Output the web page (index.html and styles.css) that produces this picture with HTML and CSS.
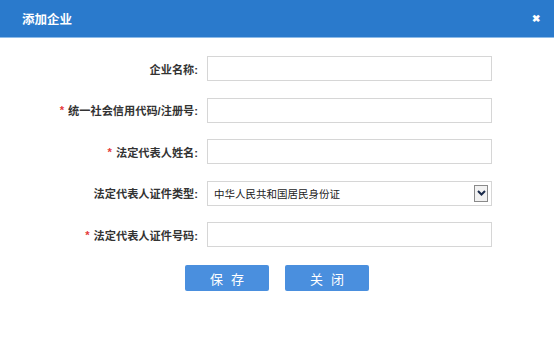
FILE: index.html
```html
<!DOCTYPE html>
<html lang="zh-CN">
<head>
    <meta charset="UTF-8">
    <meta name="viewport" content="width=device-width, initial-scale=1.0">
    <title>添加企业</title>
    <link rel="stylesheet" href="styles.css">
</head>
<body>
    <div class="dialog">
        <div class="dialog-header">
            <span class="dialog-title">添加企业</span>
            <span class="dialog-close">&#10006;</span>
        </div>
        <form class="dialog-form" onsubmit="return false;">
            <label class="form-label" for="qymc">企业名称:</label>
            <input class="form-input" type="text" id="qymc">

            <label class="form-label" for="tyxydm"><span class="req">*</span>统一社会信用代码/注册号:</label>
            <input class="form-input" type="text" id="tyxydm">

            <label class="form-label" for="fddbr"><span class="req">*</span>法定代表人姓名:</label>
            <input class="form-input" type="text" id="fddbr">

            <label class="form-label" for="zjlx">法定代表人证件类型:</label>
            <div class="form-select">
                <span class="select-text">中华人民共和国居民身份证</span>
                <span class="select-arrow">
                    <svg width="9" height="6" viewBox="0 0 9 6"><path d="M1 1 L4.5 4.5 L8 1" fill="none" stroke="#1a2a4a" stroke-width="2"/></svg>
                </span>
            </div>

            <label class="form-label" for="zjhm"><span class="req">*</span>法定代表人证件号码:</label>
            <input class="form-input" type="text" id="zjhm">
        </form>
        <div class="dialog-buttons">
            <button type="button" class="btn">保存</button>
            <button type="button" class="btn">关闭</button>
        </div>
    </div>
</body>
</html>
```

FILE: styles.css
```css
body {
    margin: 0;
    padding: 0;
    background-color: #fff;
    font-family: "Liberation Sans", "Noto Sans CJK SC", sans-serif;
    color: #333;
}

.dialog {
    width: 554px;
    height: 349px;
}

.dialog-header {
    height: 37px;
    background-color: #2a7acc;
    border-bottom: 1px solid #8dbbe8;
    display: flex;
    align-items: center;
    justify-content: space-between;
    padding: 0 14px 0 22px;
}

.dialog-title {
    color: #fff;
    font-size: 12.5px;
    font-weight: bold;
}

.dialog-close {
    color: #fff;
    font-size: 10px;
    font-weight: bold;
}

.dialog-form {
    display: grid;
    grid-template-columns: 198px 285px;
    column-gap: 9px;
    row-gap: 16.5px;
    margin-top: 18px;
}

.form-label {
    display: flex;
    align-items: center;
    justify-content: flex-end;
    font-size: 11.2px;
    font-weight: bold;
    color: #333;
}

.req {
    color: #e53a3a;
    margin-right: 4px;
}

.form-input {
    height: 25px;
    box-sizing: border-box;
    border: 1px solid #d6d6d6;
    margin: 0;
    padding: 0 6px;
    background-color: #fff;
}

.form-select {
    height: 25px;
    box-sizing: border-box;
    border: 1px solid #d6d6d6;
    display: flex;
    align-items: center;
    justify-content: space-between;
    padding: 0 3px 0 6px;
    font-size: 10.5px;
    color: #222;
}

.select-arrow {
    width: 14px;
    height: 17px;
    box-sizing: border-box;
    border: 1px solid #8a8a8a;
    background-color: #f2f2f2;
    display: flex;
    align-items: center;
    justify-content: center;
}

.dialog-buttons {
    display: flex;
    justify-content: center;
    gap: 16px;
    margin-top: 18px;
}

.btn {
    width: 84px;
    height: 26px;
    border: none;
    border-radius: 2px;
    background-color: #4a8fde;
    color: #fff;
    font-family: "Liberation Sans", "Noto Sans CJK SC", sans-serif;
    font-size: 13px;
    letter-spacing: 8px;
    text-indent: 8px;
    padding: 0;
    cursor: pointer;
}
```
